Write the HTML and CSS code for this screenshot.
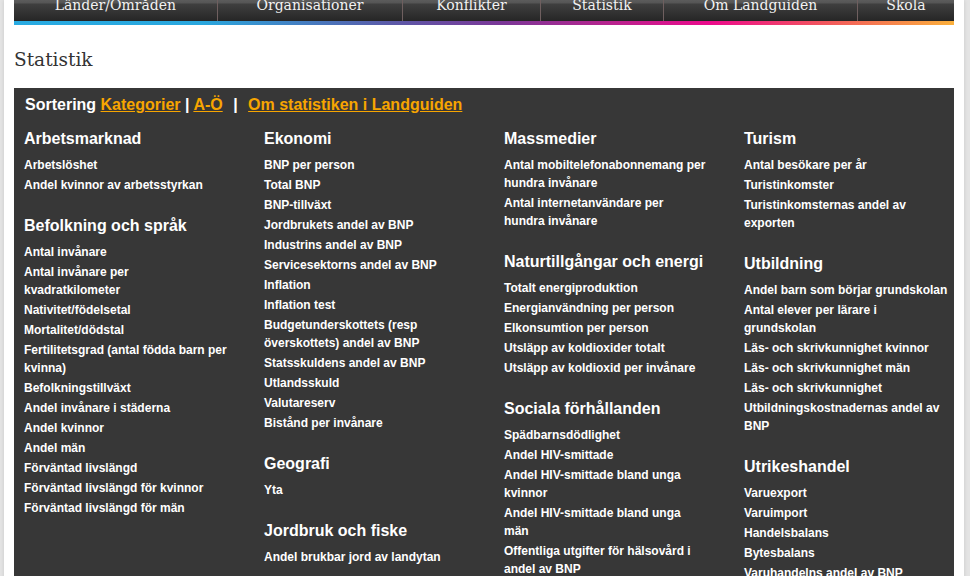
FILE: index.html
```html
<!DOCTYPE html>
<html lang="sv">
<head>
    <meta charset="UTF-8">
    <meta name="viewport" content="width=device-width, initial-scale=1.0">
    <title>Statistik - Landguiden</title>
    <link rel="stylesheet" href="styles.css">
</head>
<body>

    <div class="page">
        <ul class="main-nav">
            <li><a href="#">Länder/Områden</a></li>
            <li><a href="#">Organisationer</a></li>
            <li><a href="#">Konflikter</a></li>
            <li><a href="#">Statistik</a></li>
            <li><a href="#">Om Landguiden</a></li>
            <li><a href="#">Skola</a></li>
        </ul>
        <div class="nav-stripe"></div>

        <h1>Statistik</h1>

        <div class="stats">
            <div class="sorting">
                Sortering <a href="#">Kategorier</a> | <a href="#">A-Ö</a>
                <span class="sep">|</span>
                <a href="#">Om statistiken i Landguiden</a>
            </div>

            <div class="columns">
                <div class="col">
                    <h2>Arbetsmarknad</h2>
                    <ul>
                        <li><a href="#">Arbetslöshet</a></li>
                        <li><a href="#">Andel kvinnor av arbetsstyrkan</a></li>
                    </ul>
                    <h2>Befolkning och språk</h2>
                    <ul>
                        <li><a href="#">Antal invånare</a></li>
                        <li><a href="#">Antal invånare per kvadratkilometer</a></li>
                        <li><a href="#">Nativitet/födelsetal</a></li>
                        <li><a href="#">Mortalitet/dödstal</a></li>
                        <li><a href="#">Fertilitetsgrad (antal födda barn per kvinna)</a></li>
                        <li><a href="#">Befolkningstillväxt</a></li>
                        <li><a href="#">Andel invånare i städerna</a></li>
                        <li><a href="#">Andel kvinnor</a></li>
                        <li><a href="#">Andel män</a></li>
                        <li><a href="#">Förväntad livslängd</a></li>
                        <li><a href="#">Förväntad livslängd för kvinnor</a></li>
                        <li><a href="#">Förväntad livslängd för män</a></li>
                    </ul>
                </div>

                <div class="col">
                    <h2>Ekonomi</h2>
                    <ul>
                        <li><a href="#">BNP per person</a></li>
                        <li><a href="#">Total BNP</a></li>
                        <li><a href="#">BNP-tillväxt</a></li>
                        <li><a href="#">Jordbrukets andel av BNP</a></li>
                        <li><a href="#">Industrins andel av BNP</a></li>
                        <li><a href="#">Servicesektorns andel av BNP</a></li>
                        <li><a href="#">Inflation</a></li>
                        <li><a href="#">Inflation test</a></li>
                        <li><a href="#">Budgetunderskottets (resp överskottets) andel av BNP</a></li>
                        <li><a href="#">Statsskuldens andel av BNP</a></li>
                        <li><a href="#">Utlandsskuld</a></li>
                        <li><a href="#">Valutareserv</a></li>
                        <li><a href="#">Bistånd per invånare</a></li>
                    </ul>
                    <h2>Geografi</h2>
                    <ul>
                        <li><a href="#">Yta</a></li>
                    </ul>
                    <h2>Jordbruk och fiske</h2>
                    <ul>
                        <li><a href="#">Andel brukbar jord av landytan</a></li>
                    </ul>
                </div>

                <div class="col">
                    <h2>Massmedier</h2>
                    <ul>
                        <li><a href="#">Antal mobiltelefonabonnemang per hundra invånare</a></li>
                        <li><a href="#">Antal internetanvändare per<br>hundra invånare</a></li>
                    </ul>
                    <h2>Naturtillgångar och energi</h2>
                    <ul>
                        <li><a href="#">Totalt energiproduktion</a></li>
                        <li><a href="#">Energianvändning per person</a></li>
                        <li><a href="#">Elkonsumtion per person</a></li>
                        <li><a href="#">Utsläpp av koldioxider totalt</a></li>
                        <li><a href="#">Utsläpp av koldioxid per invånare</a></li>
                    </ul>
                    <h2>Sociala förhållanden</h2>
                    <ul>
                        <li><a href="#">Spädbarnsdödlighet</a></li>
                        <li><a href="#">Andel HIV-smittade</a></li>
                        <li><a href="#">Andel HIV-smittade bland unga kvinnor</a></li>
                        <li><a href="#">Andel HIV-smittade bland unga män</a></li>
                        <li><a href="#">Offentliga utgifter för hälsovård i andel av BNP</a></li>
                    </ul>
                </div>

                <div class="col">
                    <h2>Turism</h2>
                    <ul>
                        <li><a href="#">Antal besökare per år</a></li>
                        <li><a href="#">Turistinkomster</a></li>
                        <li><a href="#">Turistinkomsternas andel av exporten</a></li>
                    </ul>
                    <h2>Utbildning</h2>
                    <ul>
                        <li><a href="#">Andel barn som börjar grundskolan</a></li>
                        <li><a href="#">Antal elever per lärare i grundskolan</a></li>
                        <li><a href="#">Läs- och skrivkunnighet kvinnor</a></li>
                        <li><a href="#">Läs- och skrivkunnighet män</a></li>
                        <li><a href="#">Läs- och skrivkunnighet</a></li>
                        <li><a href="#">Utbildningskostnadernas andel av BNP</a></li>
                    </ul>
                    <h2>Utrikeshandel</h2>
                    <ul>
                        <li><a href="#">Varuexport</a></li>
                        <li><a href="#">Varuimport</a></li>
                        <li><a href="#">Handelsbalans</a></li>
                        <li><a href="#">Bytesbalans</a></li>
                        <li><a href="#">Varuhandelns andel av BNP</a></li>
                    </ul>
                </div>
            </div>
        </div>
    </div>

</body>
</html>
```

FILE: styles.css
```css
body {
    margin: 0;
    background: #e4e4e4;
    font-family: "Liberation Sans", Arial, sans-serif;
}
.page {
    width: 940px;
    margin-left: 4px;
    padding: 0 10px 40px;
    background: white;
    box-shadow: 0 0 4px rgba(0, 0, 0, 0.12);
}

/* top menu */
.main-nav {
    display: table;
    width: 100%;
    margin: 0;
    padding: 0;
    list-style: none;
    background: linear-gradient(#5c5c5c 0, #555 3px, #3f3f3f 4px, #262626 100%);
}
.main-nav li {
    display: table-cell;
    height: 21px;
    padding: 0 17px;
    text-align: center;
    vertical-align: top;
    border-left: 1px solid #6f5f5f;
    white-space: nowrap;
}
.main-nav li:first-child {
    border-left: none;
}
.main-nav a {
    display: block;
    font-family: "DejaVu Serif", serif;
    font-size: 14px;
    line-height: 10px;
    color: #f2f2f2;
    text-decoration: none;
}
.nav-stripe {
    height: 4px;
    background: linear-gradient(to right, #29abe2 0%, #2aa7de 20%, #5b5aa8 40%, #7b3797 52%, #b5248e 63%, #ec0b8c 74%, #f2555e 86%, #fbb03b 100%);
}

h1 {
    margin: 23px 0 16px;
    font-family: "DejaVu Serif", serif;
    font-size: 18.5px;
    font-weight: normal;
    line-height: 24px;
    color: #333;
}

/* statistics box */
.stats {
    background: #373737;
    padding: 8px 10px 20px;
    color: white;
}
.sorting {
    font-size: 16px;
    font-weight: bold;
    line-height: 18px;
    padding-left: 1px;
}
.sorting a {
    color: #f7a500;
}
.sorting .sep {
    margin: 0 6px;
}
.columns {
    display: grid;
    grid-template-columns: repeat(4, 240px);
}
.col h2, .col ul {
    max-width: 203.5px;
}
h2 {
    margin: 15px 0 7px;
    font-size: 16px;
    line-height: 20px;
}
ul {
    list-style: none;
    margin: 0 0 22px;
    padding: 0;
}
.col li {
    font-size: 12px;
    font-weight: bold;
    line-height: 18px;
    margin-bottom: 2px;
}
.col a {
    color: white;
    text-decoration: none;
}
```
